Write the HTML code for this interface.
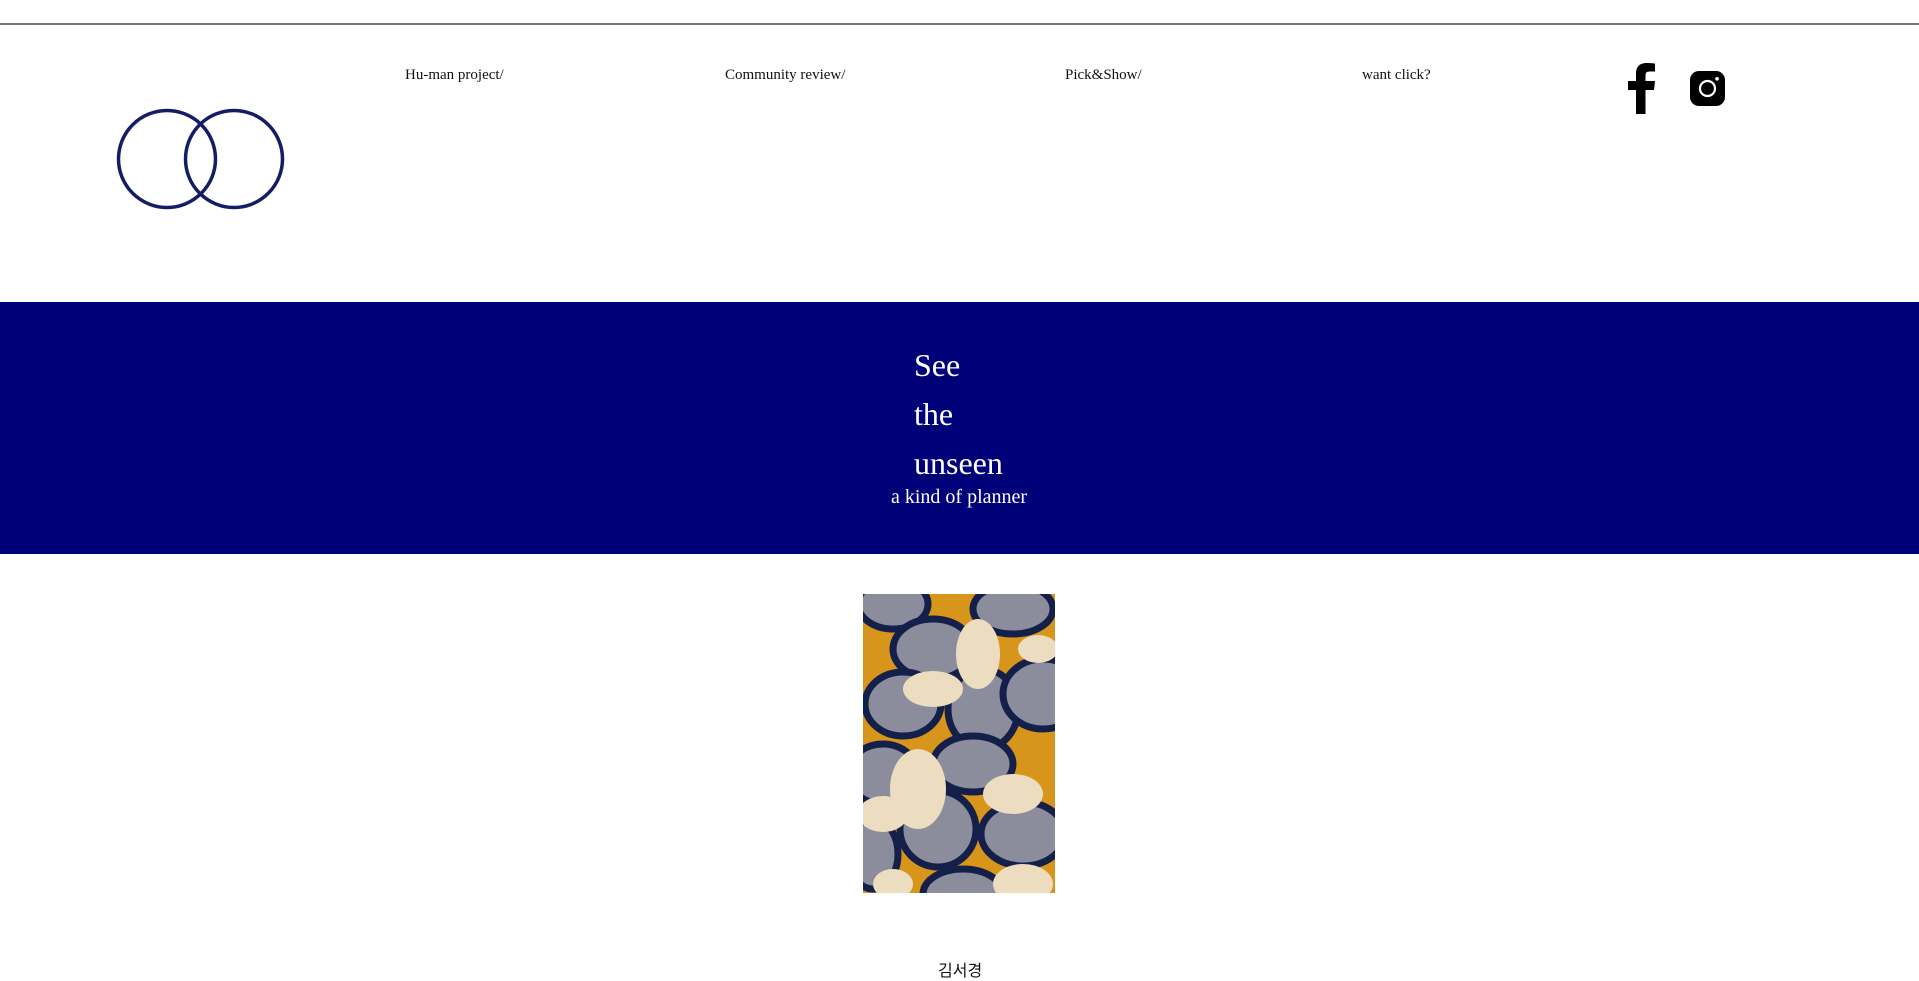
<!DOCTYPE html>
<html><head><meta charset="utf-8"><style>
html,body{margin:0;padding:0;background:#fff;width:1919px;height:969px;overflow:hidden;font-family:"Liberation Serif","Noto Serif CJK SC",serif;}
.abs{position:absolute;}
.nav{position:absolute;top:67px;font-size:15px;color:#111;white-space:nowrap;}
.hero{position:absolute;left:0;top:302px;width:1919px;height:252px;background:#000078;}
.big{position:absolute;left:914px;color:#fff;font-size:32px;line-height:49px;}
</style></head><body>
<div class="abs" style="left:0;top:23px;width:1919px;height:2px;background:#7a7a7a"></div>
<svg class="abs" style="left:112px;top:104px" width="180" height="110">
<circle cx="55" cy="55" r="48.5" fill="none" stroke="#131d66" stroke-width="3.5"/>
<circle cx="122" cy="55" r="48.5" fill="none" stroke="#131d66" stroke-width="3.5"/>
</svg>
<div class="nav" style="left:405px">Hu-man project/</div>
<div class="nav" style="left:725px">Community review/</div>
<div class="nav" style="left:1065px">Pick&amp;Show/</div>
<div class="nav" style="left:1362px">want click?</div>
<svg class="abs" style="left:1626px;top:62px" width="32" height="52" viewBox="0 0 32 52">
<path d="M10 52V28H2V19H10V12C10 4 14 1 21 1C25 1 28 1.5 29 1.6V9.5H24C20 9.5 19.5 11 19.5 14V19H29L28 28H19.5V52Z" fill="#000"/>
</svg>
<svg class="abs" style="left:1690px;top:71px" width="35" height="35" viewBox="0 0 35 35">
<rect x="0" y="0" width="35" height="35" rx="9" fill="#000"/>
<circle cx="17.5" cy="17.5" r="7.5" fill="none" stroke="#fff" stroke-width="2.2"/>
<circle cx="27" cy="7.8" r="1.8" fill="#fff"/>
</svg>
<div class="hero"></div>
<div class="big" style="top:341px">See</div>
<div class="big" style="top:390px">the</div>
<div class="big" style="top:439px">unseen</div>
<div class="abs" style="left:891px;top:486px;color:#fff;font-size:20px;white-space:nowrap">a kind of planner</div>
<svg class="abs" style="left:863px;top:594px" width="192" height="299" viewBox="0 0 192 299">
<rect width="192" height="299" fill="#d8951c"/>
<g stroke="#14204a" stroke-width="7">
<ellipse cx="30" cy="10" rx="35" ry="25" fill="#8c8d9c"/>
<ellipse cx="150" cy="15" rx="40" ry="25" fill="#8c8d9c"/>
<ellipse cx="70" cy="55" rx="40" ry="30" fill="#8c8d9c"/>
<ellipse cx="40" cy="110" rx="38" ry="32" fill="#8c8d9c"/>
<ellipse cx="120" cy="115" rx="35" ry="40" fill="#8c8d9c"/>
<ellipse cx="180" cy="100" rx="40" ry="35" fill="#8c8d9c"/>
<ellipse cx="20" cy="180" rx="35" ry="30" fill="#8c8d9c"/>
<ellipse cx="110" cy="170" rx="40" ry="28" fill="#8c8d9c"/>
<ellipse cx="75" cy="235" rx="38" ry="38" fill="#8c8d9c"/>
<ellipse cx="160" cy="240" rx="42" ry="32" fill="#8c8d9c"/>
<ellipse cx="10" cy="260" rx="25" ry="35" fill="#8c8d9c"/>
<ellipse cx="100" cy="300" rx="40" ry="25" fill="#8c8d9c"/>
</g>
<g fill="#ecdcc0">
<ellipse cx="115" cy="60" rx="22" ry="35"/>
<ellipse cx="70" cy="95" rx="30" ry="18"/>
<ellipse cx="175" cy="55" rx="20" ry="14"/>
<ellipse cx="55" cy="195" rx="28" ry="40"/>
<ellipse cx="150" cy="200" rx="30" ry="20"/>
<ellipse cx="20" cy="220" rx="25" ry="18"/>
<ellipse cx="160" cy="290" rx="30" ry="20"/>
<ellipse cx="30" cy="290" rx="20" ry="15"/>
</g>
</svg>
<div class="abs" style="left:938px;top:957px;font-size:16px;color:#111;font-family:'Liberation Sans','Noto Sans CJK KR',sans-serif">김서경</div>
</body></html>
